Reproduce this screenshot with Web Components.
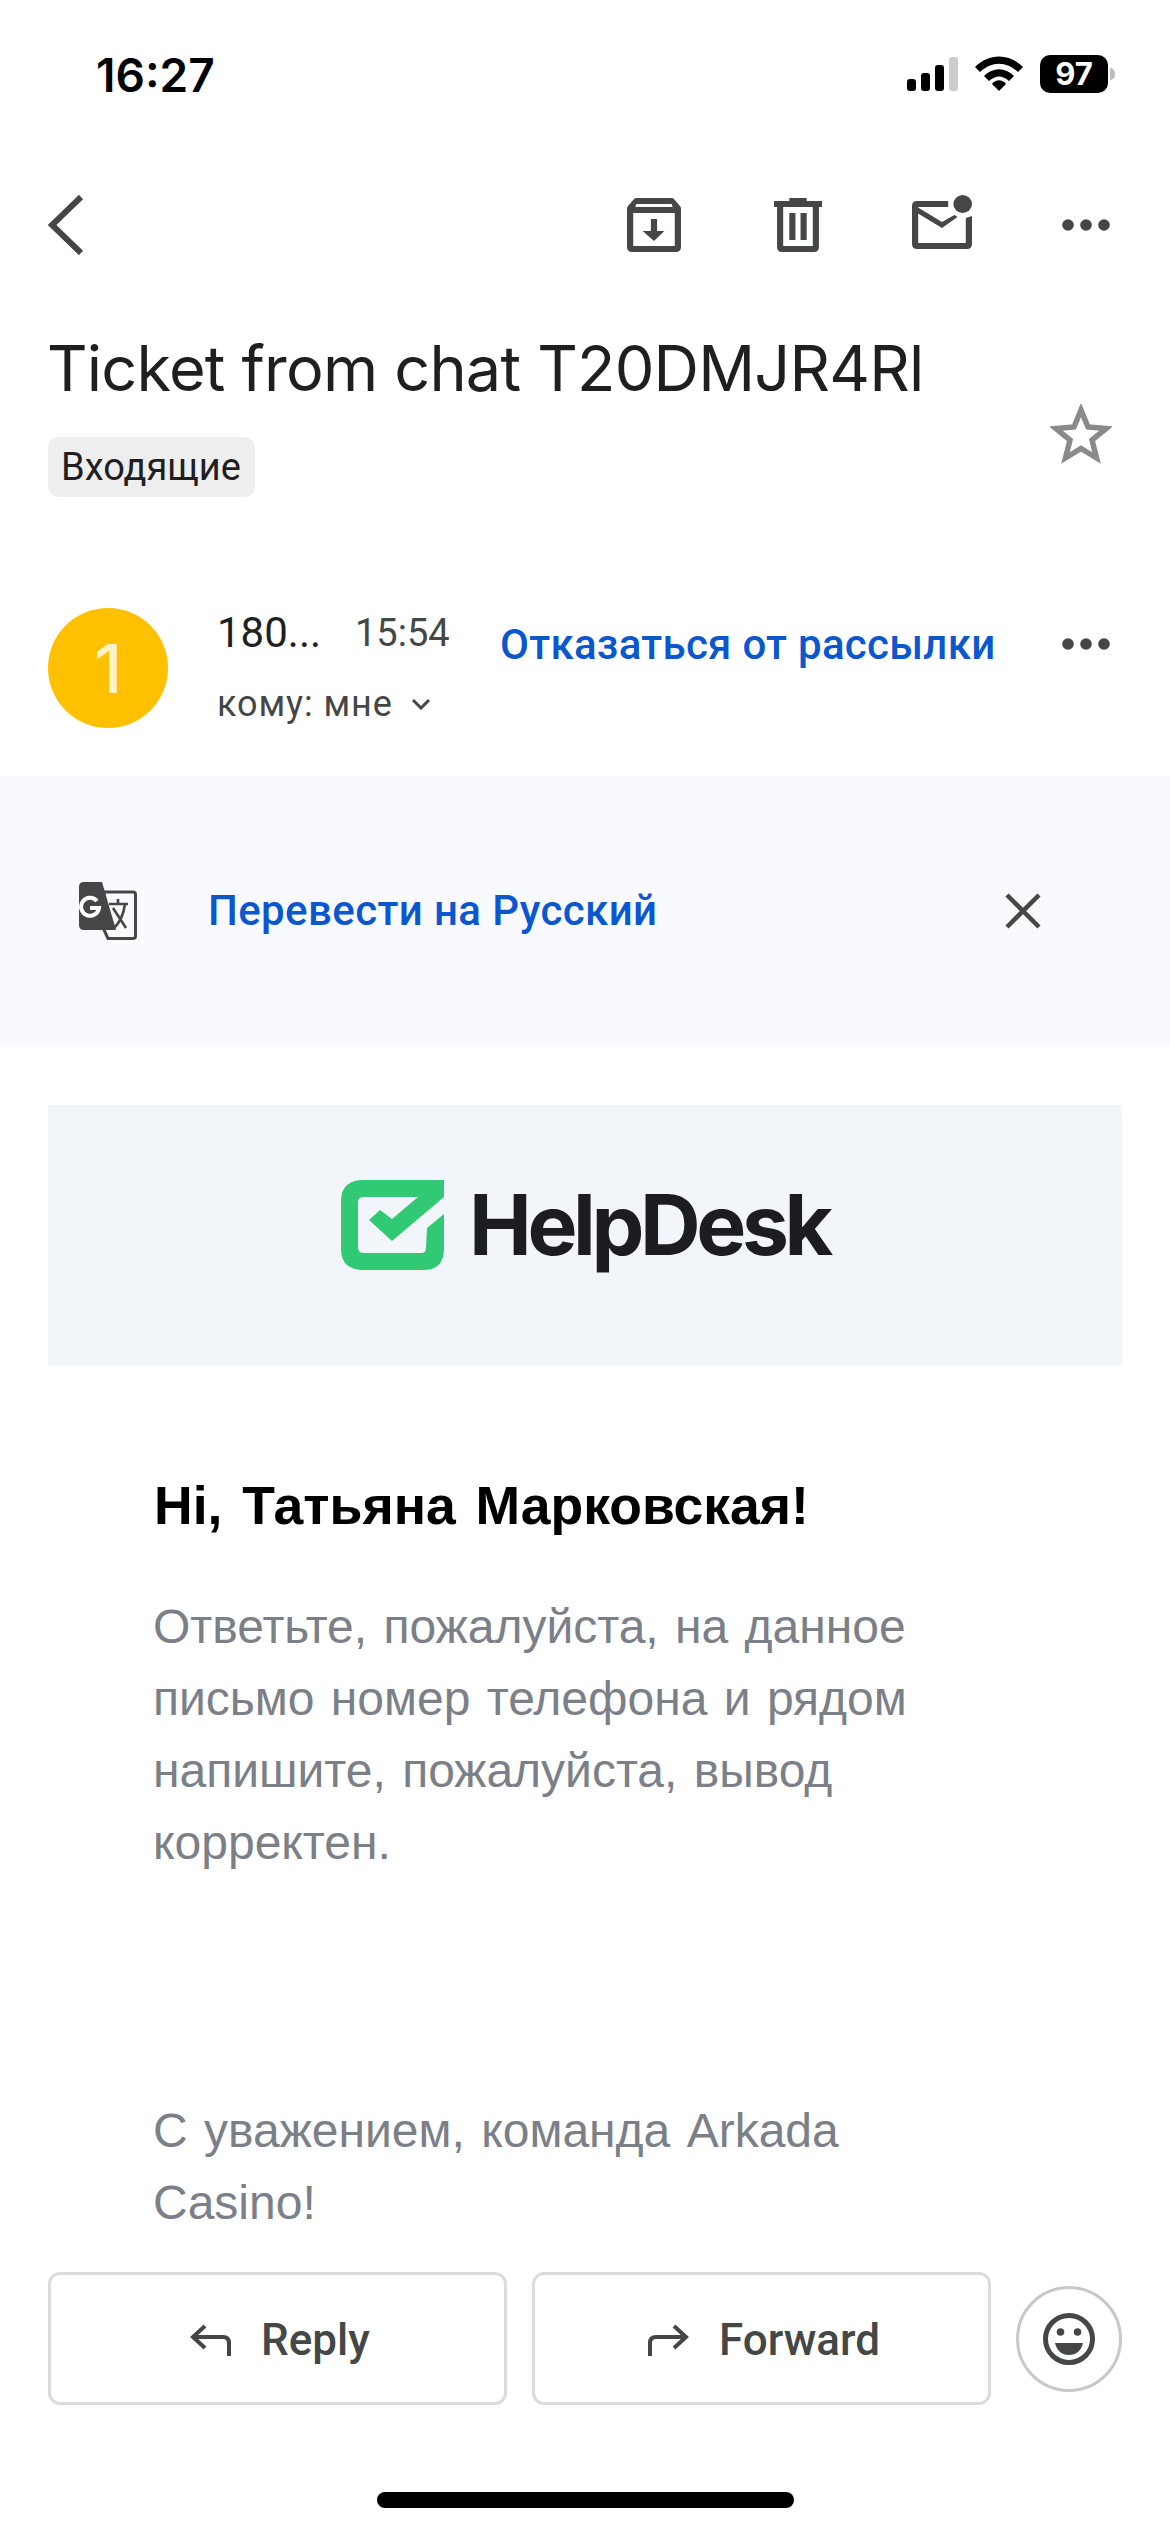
<!DOCTYPE html>
<html lang="ru">
<head>
<meta charset="utf-8">
<title>Ticket from chat</title>
<style>
    html, body { margin: 0; padding: 0; background: #fff; }
    body {
        width: 1170px;
        height: 2532px;
        overflow: hidden;
        display: flex;
        flex-direction: column;
        font-family: Inter, "Noto Sans", sans-serif;
    }
</style>
</head>
<body>
<status-bar time="16:27" battery="97"></status-bar>
<mail-toolbar></mail-toolbar>
<mail-subject label="Входящие">Ticket from chat T20DMJR4Rl</mail-subject>
<sender-row sender="180..." time="15:54" to="кому: мне" initial="1">Отказаться от рассылки</sender-row>
<translate-banner>Перевести на Русский</translate-banner>
<logo-banner></logo-banner>
<mail-body>
    <span slot="greeting">Hi, Татьяна Марковская!</span>
    <span slot="message">Ответьте, пожалуйста, на данное<br>письмо номер телефона и рядом<br>напишите, пожалуйста, вывод<br>корректен.</span>
    <span slot="signature">С уважением, команда Arkada<br>Casino!</span>
</mail-body>
<action-bar></action-bar>
<home-bar></home-bar>

<script>
const DOTS = `<svg width="48" height="12" viewBox="0 0 48 12" fill="#444746"><circle cx="6" cy="6" r="5.8"/><circle cx="24" cy="6" r="5.8"/><circle cx="42" cy="6" r="5.8"/></svg>`;

function template(html) {
    const tmp = document.createElement('template');
    tmp.innerHTML = html;
    return tmp;
}

class ShadowPart extends HTMLElement {
    constructor() {
        super();
        this.attachShadow({mode: 'open'});
        this.shadowRoot.appendChild(document.importNode(this.constructor.tmp.content, true));
    }

    fill(selector, attr) {
        this.shadowRoot.querySelector(selector).textContent = this.getAttribute(attr);
    }
}

customElements.define('status-bar', class extends ShadowPart {
    static tmp = template(`
        <style>
            :host { display: flex; height: 165px; box-sizing: border-box; padding: 52px 55px 0 96px; justify-content: space-between; align-items: flex-start; }
            .time { font: 600 46px/46px Inter, sans-serif; color: #000; }
            .right { display: flex; align-items: flex-start; margin-top: 3px; }
            .signal { margin-top: 2px; }
            .wifi { margin: 1px 17px 0 17px; }
            .battery { position: relative; width: 68px; height: 38px; border-radius: 10px; background: #000; color: #fff; font: 700 31px/38px Inter, sans-serif; text-align: center; }
            .nub { width: 5px; height: 12px; margin: 13px 0 0 2px; background: #bdbdbd; border-radius: 0 5px 5px 0; }
        </style>
        <span class="time"></span>
        <div class="right">
            <svg class="signal" width="51" height="34" viewBox="0 0 51 34">
                <rect x="0" y="22" width="9" height="12" rx="3"/>
                <rect x="14" y="16" width="9" height="18" rx="3"/>
                <rect x="28" y="8" width="9" height="26" rx="3"/>
                <rect x="42" y="0" width="9" height="34" rx="3" fill="#cccccc"/>
            </svg>
            <svg class="wifi" width="48" height="35" viewBox="0 0 48 35">
                <path d="M0 11 C14 -3 34 -3 48 11 L43 16 C31 5 17 5 5 16Z"/>
                <path d="M9 20 C18 11 30 11 39 20 L34 25 C27 19 21 19 14 25Z"/>
                <path d="M17 28 C21 23 27 23 31 28 L24 35Z"/>
            </svg>
            <div class="battery"></div>
            <div class="nub"></div>
        </div>
    `);

    connectedCallback() {
        this.fill('.time', 'time');
        this.fill('.battery', 'battery');
    }
});

customElements.define('mail-toolbar', class extends ShadowPart {
    static tmp = template(`
        <style>
            :host { display: flex; height: 120px; box-sizing: border-box; padding: 0 60px 0 48px; align-items: center; }
            svg { display: block; }
            .back { margin-right: auto; }
            .archive { margin-right: 93px; }
            .trash { margin-right: 90px; }
            .mail { margin-right: 90px; margin-top: -6px; }
        </style>
        <svg class="back" width="36" height="60" viewBox="0 0 36 60" fill="none" stroke="#444746" stroke-width="6"><path d="M33 2 L4 30 L33 58"/></svg>
        <svg class="archive" width="54" height="54" viewBox="0 0 52 54" preserveAspectRatio="none" fill="#444746">
            <path fill-rule="evenodd" d="M9 0 H43 Q45 0 46 2 L51 8 Q52 9 52 11 V49 Q52 54 47 54 H5 Q0 54 0 49 V11 Q0 9 1 8 L6 2 Q7 0 9 0Z M9 6 L8 9 H44 L43 6Z M6 15 V48 H46 V15Z"/>
            <path d="M23 21 H29 V33 H36 L26 43 L15 33 H23Z"/>
        </svg>
        <svg class="trash" width="48" height="54" viewBox="0 0 47 54" preserveAspectRatio="none" fill="#444746">
            <path fill-rule="evenodd" d="M15 0 H32 V3 H47 V9 H44 V49 Q44 54 39 54 H8 Q3 54 3 49 V9 H0 V3 H15Z M9 9 V48 H38 V9Z"/>
            <rect x="15" y="15" width="6" height="27"/><rect x="26" y="15" width="6" height="27"/>
        </svg>
        <svg class="mail" width="60" height="55" viewBox="0 0 58 55" preserveAspectRatio="none" fill="#444746">
            <circle cx="49" cy="9" r="9"/>
            <path d="M35 6 V12 H6 V48 H52 V23 L58 21 V49 Q58 54 53 54 H5 Q0 54 0 49 V11 Q0 6 5 6Z"/>
            <path d="M5 12 L29 27 L41 20 L44 22 L29 33 L5 18Z"/>
        </svg>
        ${DOTS}
    `);
});

customElements.define('mail-subject', class extends ShadowPart {
    static tmp = template(`
        <style>
            :host { display: flex; justify-content: space-between; padding: 43px 58px 0 48px; color: #1f1f1f; }
            .title { font: 400 63px/80px Inter, sans-serif; letter-spacing: -0.8px; margin-left: -1px; white-space: nowrap; }
            .chip { display: inline-block; margin-top: 29px; height: 60px; padding: 0 14px 0 13px; border-radius: 11px; background: #eeeeee; font: 400 38px/60px Roboto, sans-serif; }
            svg { display: block; margin-top: 76px; }
        </style>
        <div>
            <div class="title"><slot></slot></div>
            <span class="chip"></span>
        </div>
        <svg width="62" height="60" viewBox="0 0 62 60" fill="none" stroke="#8a8a8a" stroke-width="5.500"><path d="M31 6 L38 23 L56 24.500 L42 36 L46.500 54 L31 44.500 L15.500 54 L20 36 L6 24.500 L24 23Z"/></svg>
    `);

    connectedCallback() {
        this.fill('.chip', 'label');
    }
});

customElements.define('sender-row', class extends ShadowPart {
    static tmp = template(`
        <style>
            :host { display: flex; align-items: flex-start; height: 120px; margin-top: 111px; padding: 0 60px 0 48px; font-family: Roboto, sans-serif; }
            .avatar { flex: none; width: 120px; height: 120px; border-radius: 50%; background: #ffc000; color: #fff3c8; display: flex; align-items: center; justify-content: center; font: 500 68px/1 Inter, sans-serif; }
            .meta { flex: none; width: 283px; margin-left: 49px; }
            .line { display: flex; height: 50px; line-height: 50px; white-space: nowrap; }
            .sender { font-size: 42px; color: #1f1f1f; width: 138px; }
            .time { font-size: 38px; color: #444746; }
            .to { margin-top: 21px; font-size: 36px; color: #444746; align-items: center; gap: 18px; letter-spacing: 0.9px; }
            .link { margin-top: 12px; font: 500 42px/50px Roboto, sans-serif; letter-spacing: 0.3px; color: #0b57d0; white-space: nowrap; }
            svg { display: block; }
            .more { margin-left: auto; margin-top: 30px; }
        </style>
        <div class="avatar"></div>
        <div class="meta">
            <div class="line"><span class="sender"></span><span class="time"></span></div>
            <div class="line to"><span class="who"></span>
                <svg width="20" height="12" viewBox="0 0 20 12" fill="none" stroke="#444746" stroke-width="3"><path d="M2 2 L10 10 L18 2"/></svg>
            </div>
        </div>
        <div class="link"><slot></slot></div>
        <div class="more">${DOTS}</div>
    `);

    connectedCallback() {
        this.fill('.avatar', 'initial');
        this.fill('.sender', 'sender');
        this.fill('.time', 'time');
        this.fill('.who', 'to');
    }
});

customElements.define('translate-banner', class extends ShadowPart {
    static tmp = template(`
        <style>
            :host { display: flex; align-items: center; height: 269px; margin-top: 48px; padding: 0 129px 0 79px; background: #f8fafe; }
            .text { margin-left: 71px; font: 500 42px/50px Roboto, sans-serif; letter-spacing: 0.4px; color: #0b57d0; white-space: nowrap; }
            .close { margin-left: auto; display: block; }
        </style>
        <svg width="58" height="58" viewBox="0 0 58 58">
            <path d="M25 10 H54 Q56.500 10 56.500 12.500 V54 Q56.500 56.500 54 56.500 H29 L25 48Z" fill="none" stroke="#444746" stroke-width="3"/>
            <path d="M5 0 H23 L37 48 H5 Q0 48 0 43 V5 Q0 0 5 0Z" fill="#444746"/>
            <path d="M18 19 A 9 9 0 1 0 20 26 H11" fill="none" stroke="#fff" stroke-width="4"/>
            <path d="M30 22 H49 M39 17 V22 M34 47 Q44 38 46 22 M34 26 L47 46" fill="none" stroke="#444746" stroke-width="2.600"/>
        </svg>
        <div class="text"><slot></slot></div>
        <svg class="close" width="36" height="36" viewBox="0 0 36 36" fill="none" stroke="#444746" stroke-width="4.500"><path d="M2 2 L34 34 M34 2 L2 34"/></svg>
    `);
});

customElements.define('logo-banner', class extends ShadowPart {
    static tmp = template(`
        <style>
            :host { display: flex; align-items: center; justify-content: center; gap: 25px; height: 261px; box-sizing: border-box; padding-bottom: 22px; margin: 60px 48px 0; background: #f2f6fa; }
            .word { font: 700 84px/90px Inter, sans-serif; letter-spacing: -4.4px; color: #1c1c21; }
        </style>
        <svg width="103" height="90" viewBox="0 0 103 90" fill="#32c975">
            <path d="M23 0 H103 V17 L51 61 L28 40 L39 30 L51 39 L77 17 H23 Q17 17 17 22 V68 Q17 73 23 73 H80 Q85 73 85 68 L86 48 L103 34 V69 Q103 90 82 90 H23 Q0 90 0 69 V21 Q0 0 23 0Z"/>
        </svg>
        <span class="word">HelpDesk</span>
    `);
});

customElements.define('mail-body', class extends ShadowPart {
    static tmp = template(`
        <style>
            :host { display: block; flex: 1; min-height: 0; overflow: hidden; padding: 110px 0 0 153px; font-family: "Liberation Sans", Arial, sans-serif; }
            .greeting { font-weight: 700; font-size: 53.5px; line-height: 60px; color: #000; white-space: nowrap; word-spacing: 5px; margin-left: 1px; }
            .text { font-size: 48px; line-height: 72px; color: #7b7f87; white-space: nowrap; word-spacing: 3px; }
            .message { margin-top: 55px; }
            .signature { margin-top: 216px; }
        </style>
        <div class="greeting"><slot name="greeting"></slot></div>
        <div class="text message"><slot name="message"></slot></div>
        <div class="text signature"><slot name="signature"></slot></div>
    `);
});

customElements.define('action-button', class extends ShadowPart {
    static tmp = template(`
        <style>
            :host { display: flex; align-items: center; justify-content: center; gap: 30px; height: 133px; box-sizing: border-box; border: 3px solid #dadce0; border-radius: 12px; color: #444746; font: 500 44px/1 Roboto, sans-serif; padding: 2px 0 0 5px; }
        </style>
        <slot name="icon"></slot>
        <slot></slot>
    `);
});

customElements.define('action-bar', class extends ShadowPart {
    static tmp = template(`
        <style>
            :host { display: grid; grid-template-columns: 1fr 1fr 106px; gap: 25px; align-items: center; padding: 0 48px; }
            svg { display: block; }
            .smile { width: 106px; height: 106px; box-sizing: border-box; border: 3px solid #c8c8c8; border-radius: 50%; display: flex; align-items: center; justify-content: center; }
        </style>
        <action-button>
            <svg slot="icon" width="41" height="32" viewBox="0 0 41 32" fill="none" stroke="#444746" stroke-width="4"><path d="M15 2 L3 13 L15 24 M3 13 H33 Q39 13 39 19 V32"/></svg>
            Reply
        </action-button>
        <action-button>
            <svg slot="icon" width="41" height="32" viewBox="0 0 41 32" fill="none" stroke="#444746" stroke-width="4"><path d="M26 2 L38 13 L26 24 M38 13 H8 Q2 13 2 19 V32"/></svg>
            Forward
        </action-button>
        <div class="smile">
            <svg width="52" height="52" viewBox="0 0 52 52">
                <circle cx="26" cy="26" r="23.500" fill="none" stroke="#444746" stroke-width="5"/>
                <circle cx="17.500" cy="19" r="3.800" fill="#444746"/><circle cx="34.500" cy="19" r="3.800" fill="#444746"/>
                <path d="M12 30 H40 Q37 42 26 42 Q15 42 12 30Z" fill="#444746"/>
            </svg>
        </div>
    `);
});

customElements.define('home-bar', class extends ShadowPart {
    static tmp = template(`
        <style>
            :host { display: flex; justify-content: center; height: 127px; box-sizing: border-box; padding-top: 87px; }
            div { width: 417px; height: 16px; border-radius: 8px; background: #000; }
        </style>
        <div></div>
    `);
});
</script>
</body>
</html>
